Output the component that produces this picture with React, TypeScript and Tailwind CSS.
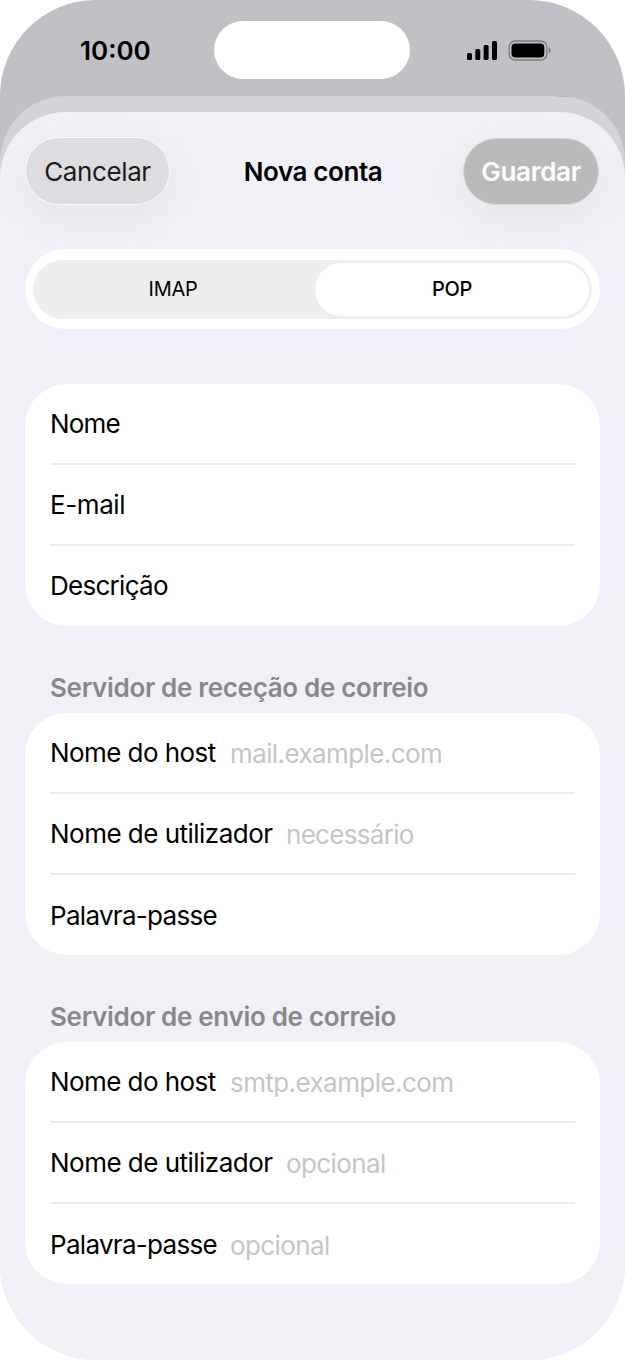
import { useState } from 'react';

type Field = {
  label: string;
  placeholder?: string;
  labelClass: string;
  placeholderClass?: string;
};

const accountFields: Field[] = [
  { label: 'Nome', labelClass: 'tracking-[-0.8px]' },
  { label: 'E-mail', labelClass: 'tracking-[-0.4px]' },
  { label: 'Descrição', labelClass: 'tracking-[-0.72px] pb-[2px]' },
];

const incomingFields: Field[] = [
  {
    label: 'Nome do host',
    placeholder: 'mail.example.com',
    labelClass: 'tracking-[-0.57px] w-[180px]',
    placeholderClass: 'tracking-[-0.6px]',
  },
  {
    label: 'Nome de utilizador',
    placeholder: 'necessário',
    labelClass: 'tracking-[-0.52px] w-[236px]',
    placeholderClass: 'tracking-[-0.7px]',
  },
  { label: 'Palavra-passe', labelClass: 'tracking-[-0.7px] w-[180px]' },
];

const outgoingFields: Field[] = [
  {
    label: 'Nome do host',
    placeholder: 'smtp.example.com',
    labelClass: 'tracking-[-0.57px] w-[180px]',
    placeholderClass: 'tracking-[-0.58px]',
  },
  {
    label: 'Nome de utilizador',
    placeholder: 'opcional',
    labelClass: 'tracking-[-0.52px] w-[236px]',
    placeholderClass: 'tracking-[-0.6px]',
  },
  {
    label: 'Palavra-passe',
    placeholder: 'opcional',
    labelClass: 'tracking-[-0.7px] w-[180px]',
    placeholderClass: 'tracking-[-0.6px]',
  },
];

const StatusBar = () => (
  <div className="flex h-24 items-start">
    <span className="w-[214px] pt-[33px] pl-20 text-[26px] leading-9 font-semibold text-black">
      10:00
    </span>
    <div className="mt-[21px] h-[58px] w-[196px] rounded-full bg-white" />
    <svg className="mt-10 ml-[57px]" width="86" height="22" viewBox="0 0 86 22">
      <rect x="0" y="13" width="5" height="7" rx="1.5" />
      <rect x="8.3" y="9" width="5" height="11" rx="1.5" />
      <rect x="16.6" y="5" width="5" height="15" rx="1.5" />
      <rect x="25" y="1" width="5" height="19" rx="1.5" />
      <rect x="42.2" y="1" width="37.6" height="19" rx="6" fill="none" stroke="#7c7b7e" strokeWidth="1.3" />
      <rect x="44.5" y="3.4" width="32.8" height="14.2" rx="4" />
      <path d="M81.7 7.6c1.5.6 1.9 1.8 1.9 2.9s-.4 2.3-1.9 2.9z" fill="#7c7b7e" />
    </svg>
  </div>
);

const SheetHeader = () => (
  <header className="flex h-[68px] items-center">
    <button className="flex h-[68px] w-[145px] items-center justify-center rounded-[34px] border-[1.5px] border-[#fbfbfc] bg-[#dddce0] text-[26px] tracking-[-0.4px] text-[#1c1c1f] shadow-[0_12px_46px_rgba(0,0,0,0.05)]">
      Cancelar
    </button>
    <h1 className="flex-1 pr-[7px] text-center text-[26px] font-semibold tracking-[-0.4px] text-black">
      Nova conta
    </h1>
    <button className="mr-px flex h-[67px] w-[136px] items-center justify-center rounded-[34px] border border-[#d6d6d8] bg-[#bababb] text-[26px] font-semibold tracking-[-0.3px] text-white shadow-[0_12px_46px_rgba(0,0,0,0.05)]">
      Guardar
    </button>
  </header>
);

const ProtocolSwitch = () => {
  const [active, setActive] = useState('POP');

  return (
    <div className="mt-11 h-20 rounded-[40px] bg-white px-2 pt-[11px]">
      <div className="grid h-[59px] grid-cols-[274px_274px] justify-between rounded-full bg-[#eeeeee] p-[3px]">
        {['IMAP', 'POP'].map((name) => (
          <button
            key={name}
            onClick={() => setActive(name)}
            className={`rounded-full pb-px text-xl tracking-[-0.3px] text-black ${
              active === name ? 'bg-white font-medium' : ''
            }`}>
            {name}
          </button>
        ))}
      </div>
    </div>
  );
};

const FieldGroup = ({ fields }: { fields: Field[] }) => (
  <div className="h-[242px] rounded-[42px] bg-white px-[25px]">
    {fields.map(({ label, placeholder, labelClass, placeholderClass }, i) => (
      <div
        key={label}
        className={`flex h-[81px] items-center text-[26px] leading-8 ${
          i < fields.length - 1 ? 'border-b-2 border-[#ebebeb]' : ''
        }`}>
        <span className={`shrink-0 whitespace-nowrap text-black ${labelClass}`}>{label}</span>
        {placeholder && (
          <span className={`pt-[2px] whitespace-nowrap text-[#c5c5c7] ${placeholderClass}`}>
            {placeholder}
          </span>
        )}
      </div>
    ))}
  </div>
);

const SectionTitle = ({ children }: { children: string }) => (
  <h2 className="flex h-[87px] items-end pb-[9px] pl-[25px] text-[26px] leading-8 font-semibold tracking-[-0.32px] text-[#88888d]">
    {children}
  </h2>
);

export default function App() {
  return (
    <div className="h-[1360px] w-[625px] bg-white font-[Inter,'Liberation_Sans',sans-serif]">
      <div className="h-full overflow-hidden rounded-[96px] bg-linear-to-b from-[#c1c0c5] from-50% to-[#f1f0f6] to-50%">
        <StatusBar />
        {/* the sheet that lies behind, only its top edge shows */}
        <div className="relative rounded-t-[66px] bg-linear-to-b from-[#d4d3d8] from-50% to-[#f1f0f6] to-50% pt-4">
          {/* thin blue glint on the sheet's edge */}
          <span className="absolute top-0 right-[50px] h-px w-6 bg-linear-to-r from-transparent via-[#9fb4cc] to-transparent" />
          <main className="h-[1248px] rounded-t-[66px] bg-[#f1f0f6] px-[25px] pt-[25px]">
            <SheetHeader />
            <ProtocolSwitch />
            <div className="mt-[55px]">
              <FieldGroup fields={accountFields} />
              <SectionTitle>Servidor de receção de correio</SectionTitle>
              <FieldGroup fields={incomingFields} />
              <SectionTitle>Servidor de envio de correio</SectionTitle>
              <FieldGroup fields={outgoingFields} />
            </div>
          </main>
        </div>
      </div>
    </div>
  );
}
